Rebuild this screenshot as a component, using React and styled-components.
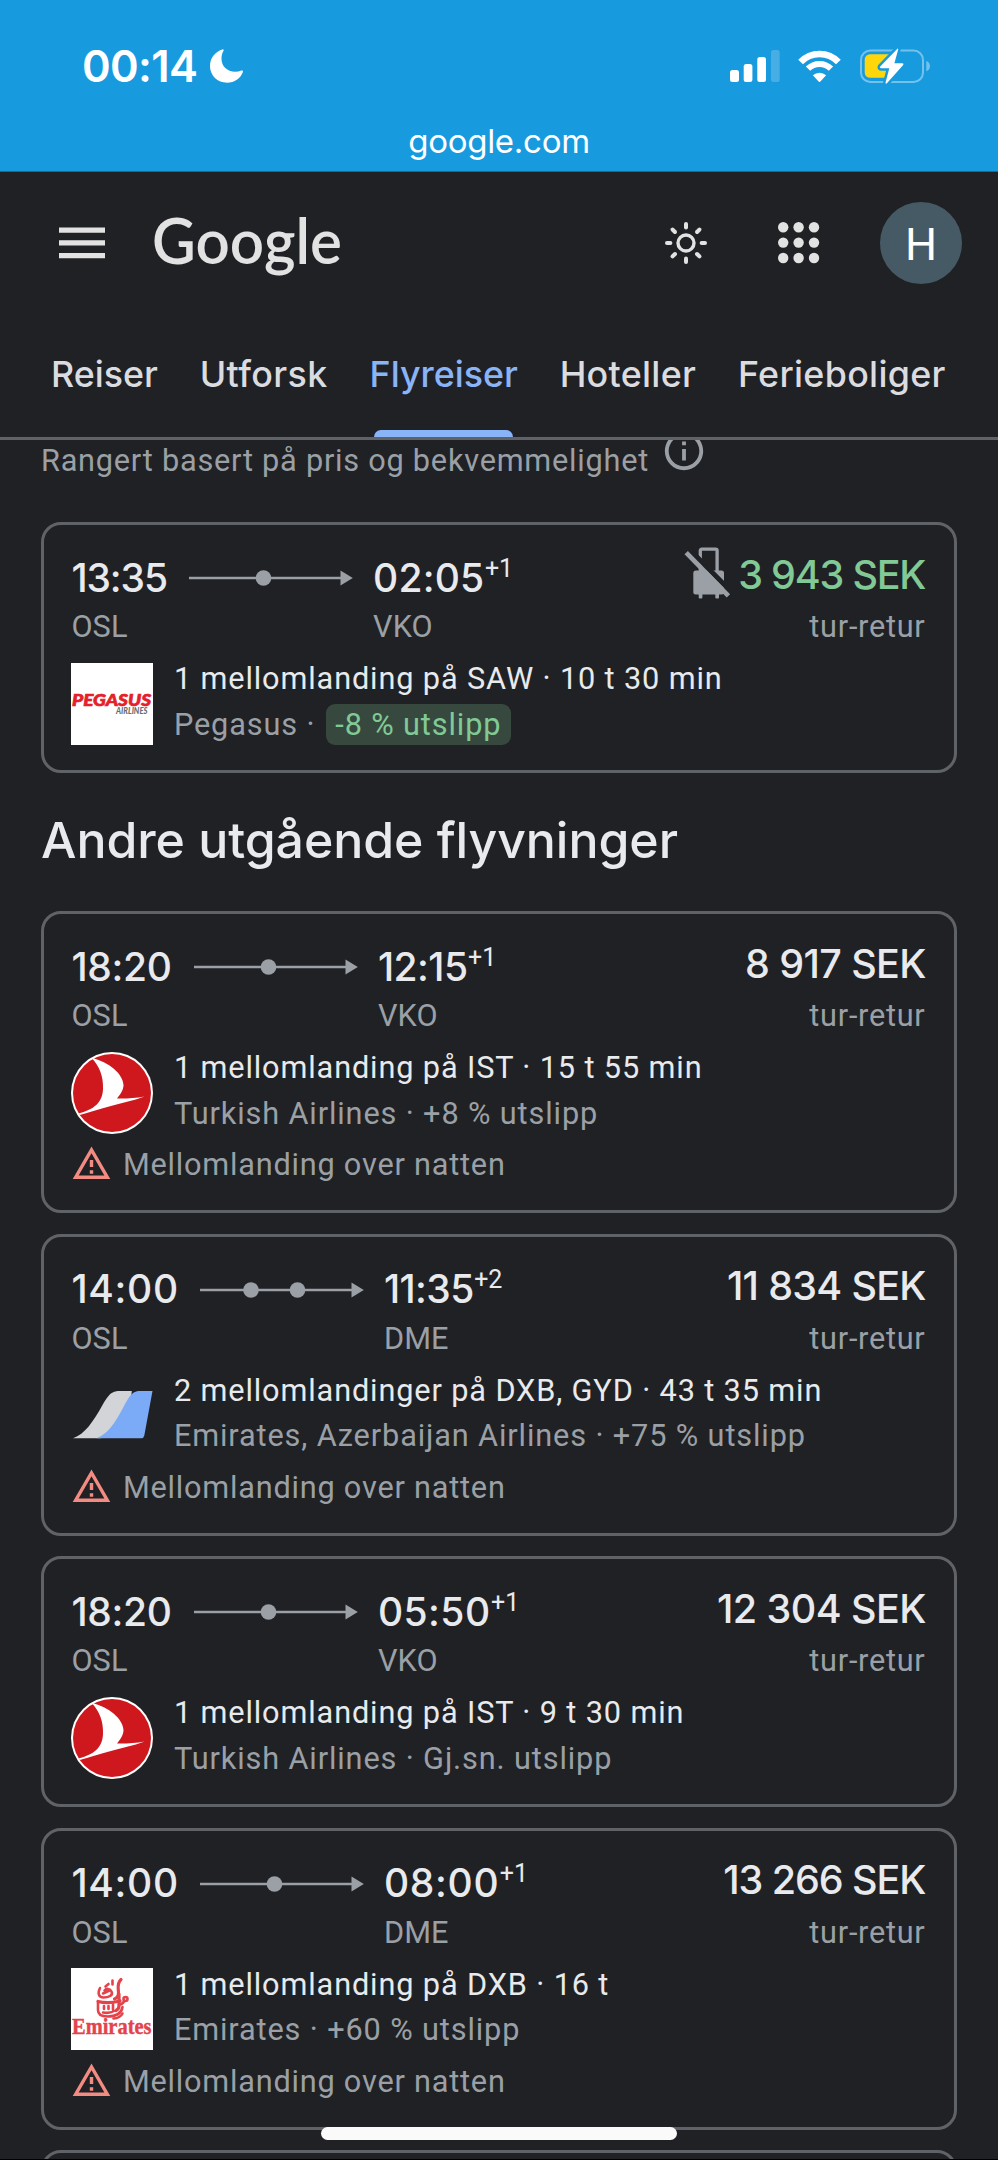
import React from "react";
import styled, { createGlobalStyle } from "styled-components";

const flights = [
  {
    departure: { time: "13:35", code: "OSL", spacing: -1.1, width: 117.7 },
    arrival: { time: "02:05", code: "VKO", spacing: 0.2, days: "+1" },
    stopCount: 1,
    stops: "1 mellomlanding på SAW · 10 t 30 min",
    airline: "Pegasus",
    logo: "pegasus",
    emission: "-8 % utslipp",
    lowEmission: true,
    price: "3 943 SEK",
    priceSpacing: -1.2,
    cheap: true,
    noCarryOn: true
  }
];

const otherFlights = [
  {
    departure: { time: "18:20", code: "OSL", spacing: -0.3, width: 122.5 },
    arrival: { time: "12:15", code: "VKO", spacing: -0.55, days: "+1" },
    stopCount: 1,
    stops: "1 mellomlanding på IST · 15 t 55 min",
    airline: "Turkish Airlines",
    logo: "turkish",
    emission: "+8 % utslipp",
    price: "8 917 SEK",
    priceSpacing: -0.6,
    warning: "Mellomlanding over natten"
  },
  {
    departure: { time: "14:00", code: "OSL", spacing: 0.7, width: 128.5 },
    arrival: { time: "11:35", code: "DME", spacing: -0.6, days: "+2" },
    stopCount: 2,
    stops: "2 mellomlandinger på DXB, GYD · 43 t 35 min",
    airline: "Emirates, Azerbaijan Airlines",
    logo: "multi",
    emission: "+75 % utslipp",
    price: "11 834 SEK",
    priceSpacing: -0.7,
    warning: "Mellomlanding over natten"
  },
  {
    departure: { time: "18:20", code: "OSL", spacing: -0.3, width: 122.5 },
    arrival: { time: "05:50", code: "VKO", spacing: 0.45, days: "+1" },
    stopCount: 1,
    stops: "1 mellomlanding på IST · 9 t 30 min",
    airline: "Turkish Airlines",
    logo: "turkish",
    emission: "Gj.sn. utslipp",
    price: "12 304 SEK",
    priceSpacing: -0.55
  },
  {
    departure: { time: "14:00", code: "OSL", spacing: 0.7, width: 128.5 },
    arrival: { time: "08:00", code: "DME", spacing: 0.7, days: "+1" },
    stopCount: 1,
    stops: "1 mellomlanding på DXB · 16 t",
    airline: "Emirates",
    logo: "emirates",
    emission: "+60 % utslipp",
    price: "13 266 SEK",
    priceSpacing: -1.05,
    warning: "Mellomlanding over natten"
  }
];

const tabs = [
  { label: "Reiser", spacing: 0 },
  { label: "Utforsk", spacing: 0.42 },
  { label: "Flyreiser", spacing: 0 },
  { label: "Hoteller", spacing: 0.31 },
  { label: "Ferieboliger", spacing: 0.31 }
];
const activeTab = "Flyreiser";

const MoonIcon = () => (
  <svg width="34" height="34" viewBox="0 0 34 34" fill="#fff">
    <path d="M13 .2C5.200 2.500 0 9 0 17c0 9.500 7.500 16.700 17 16.700 7.500 0 13.500-4.200 15.900-10.700.4-1.100-.5-1.800-1.500-1.400-2 .8-4 1.200-6.200 1.200-8 0-13.700-5.500-13.700-13 0-3 .7-5.600 2-8 .5-1-.2-1.900-.5-1.600z" />
  </svg>
);

const SignalIcon = () => (
  <svg width="50" height="32" viewBox="0 0 50 32" fill="#fff">
    <rect x="0" y="20" width="9" height="12" rx="2.500" />
    <rect x="13.700" y="14" width="8.700" height="18" rx="2.500" />
    <rect x="27.300" y="7" width="8.700" height="25" rx="2.500" />
    <rect x="41" y="0" width="8.700" height="32" rx="2.500" opacity=".2" />
  </svg>
);

const WifiIcon = () => (
  <svg width="43" height="32" viewBox="0 0 43 32" fill="none" stroke="#fff">
    <path d="M2.600 12A26.200 26.200 0 0 1 40.400 12" strokeWidth="6.600" />
    <path d="M10 18.700A16.200 16.200 0 0 1 33 18.700" strokeWidth="6" />
    <path
      d="M14.900 25.300a9.500 9.500 0 0 1 13.200 0l-5.700 6.200q-.9.800-1.800 0z"
      fill="#fff"
      stroke="none"
    />
  </svg>
);

const BatteryIcon = () => (
  <svg width="71" height="36" viewBox="0 0 71 36">
    <rect
      x="1"
      y="2.500"
      width="62"
      height="31.500"
      rx="9.500"
      fill="none"
      stroke="#fff"
      strokeWidth="2"
      opacity=".4"
    />
    <path d="M66.300 13c4.900 1.500 4.900 8.700 0 10.300z" fill="#fff" opacity=".4" />
    <path d="M10 6.300h22v23.500H10a5.300 5.300 0 0 1-5.300-5.300V11.600A5.300 5.300 0 0 1 10 6.300z" fill="#ffd60a" />
    <path
      d="M37.400.8 20.200 18.500q-.8 1.700.8 1.700h8.300l-3.800 14.600q.2 1.400 1.400.5l16.300-18.200q.9-1.800-.8-1.800h-8l3.800-13.700q0-1.500-.8-.8z"
      fill="#fff"
      stroke="#189adf"
      strokeWidth="5"
      strokeLinejoin="round"
      paintOrder="stroke"
    />
  </svg>
);

const MenuIcon = () => (
  <svg width="46" height="32" viewBox="0 0 46 32" fill="#e2e2e2">
    <path d="M0 0.500h46v5.300H0zM0 13.200h46v5.300H0zM0 26h46v5.300H0z" />
  </svg>
);

const Wordmark = () => (
  <svg width="196" height="86" viewBox="0 0 196 86">
    <text
      x="1"
      y="64"
      fontFamily="Lato, sans-serif"
      fontSize="64"
      fontWeight="600"
      fill="#e2e2e2"
      textLength="190"
      lengthAdjust="spacingAndGlyphs"
    >
      Google
    </text>
  </svg>
);

const SunIcon = () => (
  <svg width="42" height="42" viewBox="-21 -21 42 42" fill="none" stroke="#e2e2e2">
    <circle r="8" strokeWidth="3.400" />
    {[0, 45, 90, 135, 180, 225, 270, 315].map((angle) => (
      <path
        key={angle}
        d="M0-15.600v-3.400"
        strokeWidth="4"
        strokeLinecap="round"
        transform={`rotate(${angle})`}
      />
    ))}
  </svg>
);

const AppsIcon = () => (
  <svg width="42" height="42" viewBox="0 0 42 42" fill="#e2e2e2">
    {[5.2, 20.6, 36].map((y) =>
      [5.2, 20.6, 36].map((x) => <circle key={`${x}-${y}`} cx={x} cy={y} r="5.200" />)
    )}
  </svg>
);

const InfoIcon = () => (
  <svg width="46" height="46" viewBox="0 0 24 24" fill="#9aa0a6">
    <path d="M11 7h2v2h-2zm0 4h2v6h-2zm1-9C6.480 2 2 6.480 2 12s4.480 10 10 10 10-4.480 10-10S17.520 2 12 2zm0 18c-4.410 0-8-3.590-8-8s3.590-8 8-8 8 3.590 8 8-3.590 8-8 8z" />
  </svg>
);

const NoCarryOnIcon = () => (
  <svg width="46" height="52" viewBox="0 0 46 52" fill="#9aa0a6">
    <path
      d="M16.300 24V3.700q0-1.500 1.500-1.500h13.800q1.500 0 1.500 1.500V24"
      fill="none"
      stroke="#9aa0a6"
      strokeWidth="3.300"
    />
    <rect x="9.300" y="23.500" width="30.700" height="24" rx="2.500" />
    <rect x="14.700" y="45" width="3.700" height="6.500" rx="1" />
    <rect x="31.300" y="45" width="3.700" height="6.500" rx="1" />
    <path d="M5.500 2.500 47.500 45" stroke="#202124" strokeWidth="5" />
    <path d="M2.200 5.700 44.400 48.800" stroke="#9aa0a6" strokeWidth="4.700" />
  </svg>
);

const WarningIcon = () => (
  <svg width="41" height="41" viewBox="0 0 24 24" fill="#f28b82">
    <path d="M12 5.990L19.530 19H4.470L12 5.990M12 2L1 21h22L12 2zm1 14h-2v2h2v-2zm0-6h-2v4h2v-4z" />
  </svg>
);

const RouteArrow = ({ stops }) => (
  <svg width="164" height="16" viewBox="0 0 164 16" fill="#9aa0a6">
    <path d="M0 6.700h152v2.600H0z" />
    {(stops === 2 ? [51, 97.5] : [74.5]).map((x) => (
      <circle key={x} cx={x} cy="8" r="7.800" />
    ))}
    <path d="M151.500.5v15l12.300-7.500z" />
  </svg>
);

const PegasusLogo = () => (
  <svg width="82" height="82" viewBox="0 0 82 82">
    <path d="M0 0h82v82H0z" fill="#fff" />
    <g fontFamily="Lato, sans-serif" fontStyle="italic">
      <text
        x="1"
        y="43"
        fontSize="17.500"
        fontWeight="900"
        fill="#e5202b"
        stroke="#e5202b"
        strokeWidth=".7"
        textLength="79"
        lengthAdjust="spacingAndGlyphs"
      >
        PEGASUS
      </text>
      <text
        x="45"
        y="51.300"
        fontSize="8.500"
        fontWeight="900"
        fill="#6b6c70"
        textLength="31.500"
        lengthAdjust="spacingAndGlyphs"
      >
        AIRLINES
      </text>
    </g>
  </svg>
);

const TurkishLogo = () => (
  <svg width="82" height="82" viewBox="0 0 82 82">
    <circle cx="41" cy="41" r="41" fill="#fff" />
    <circle cx="41" cy="41" r="39" fill="#ce181e" />
    <path
      d="M20.500 5.800C38 10 52 22 52.500 33c.1 5-3.500 9.800-6.500 13.500 9 .2 19-.4 27.500-2C62 49 50 51 39 54.200 28 57.200 18 60.400 8.700 63l-1.200-1.600C22 58 31.500 51 32 37c.5-13-3.500-22.500-11.500-31.200z"
      fill="#fff"
    />
  </svg>
);

const MultiLogo = () => (
  <svg width="82" height="82" viewBox="0 0 82 82">
    <path d="M2 64.300C14 60 22 48 31.500 31 39 18.500 41.500 17 49.500 17h11.300l-2 20L30 64.300z" fill="#d2d4d7" />
    <path d="M25.500 64.300C37 60 44 49 52.500 33 60 19 62.500 17 70 17h11.500l-8.200 44.500q-.6 2.800-3 2.800z" fill="#7baaf7" />
  </svg>
);

const EmiratesLogo = () => (
  <svg width="82" height="82" viewBox="0 0 82 82">
    <path d="M0 0h82v82H0z" fill="#fff" />
    <g fill="none" stroke="#e4434b" strokeWidth="2.600" strokeLinecap="round">
      <path d="M50 11.500c-4.500 4-2.500 9-2.500 13.500 0 3-1.500 5-4 6" strokeWidth="3.200" />
      <path d="M41.500 12.500v4M34.500 18.500l3-2.500" />
      <path d="M29 20c-2.500 5-1.500 9.500 3.500 9.500s10-2 8-6c-1.500-3-5-3.500-7-1M32 25.500l6.500-3" />
      <path d="M27 33.500c6 1.500 14 1.500 22-.5" strokeWidth="3.200" />
      <path d="M48 26v12c0 2-1 3.500-3 4.500" strokeWidth="3.200" />
      <path d="M27 34v8c0 4.500 4 6.500 9.500 6.500 8.500 0 14-3 15-9.500" />
      <path d="M33 38v3M37.500 38v3M42 36.500v5.500M32 44.500c4 .8 8 .3 11-1.500" />
      <circle cx="54.500" cy="31" r="2" />
      <path d="M53 33.500c-1.500 2.500-3 3-5 3M42.500 50.500c4-.2 7.500-2 9-5" />
    </g>
    <text
      x="1"
      y="66.300"
      fontFamily="'Liberation Serif', serif"
      fontSize="23"
      fontWeight="700"
      fill="#e4434b"
      stroke="#e4434b"
      strokeWidth=".4"
      textLength="79.500"
      lengthAdjust="spacingAndGlyphs"
    >
      Emirates
    </text>
  </svg>
);

const logos = {
  pegasus: PegasusLogo,
  turkish: TurkishLogo,
  multi: MultiLogo,
  emirates: EmiratesLogo
};

function FlightCard({ flight }) {
  const { departure, arrival } = flight;
  const Logo = logos[flight.logo];

  return (
    <Card $tall={Boolean(flight.warning)}>
      <Summary>
        <Leg $width={departure.width}>
          <Time $spacing={departure.spacing}>{departure.time}</Time>
          <Muted>{departure.code}</Muted>
        </Leg>
        <Arrow>
          <RouteArrow stops={flight.stopCount} />
        </Arrow>
        <Leg>
          <Time $spacing={arrival.spacing}>
            {arrival.time}
            <Days>{arrival.days}</Days>
          </Time>
          <Muted>{arrival.code}</Muted>
        </Leg>
        <Fare>
          <PriceRow>
            {flight.noCarryOn && <NoCarryOnIcon />}
            <Price $cheap={flight.cheap} $spacing={flight.priceSpacing}>
              {flight.price}
            </Price>
          </PriceRow>
          <Muted $spacing={0.73}>tur-retur</Muted>
        </Fare>
      </Summary>
      <Details>
        <LogoBox>
          <Logo />
        </LogoBox>
        <div>
          <DetailLine $bright>{flight.stops}</DetailLine>
          <DetailLine>
            {flight.airline} ·{" "}
            {flight.lowEmission ? <Badge>{flight.emission}</Badge> : flight.emission}
          </DetailLine>
        </div>
      </Details>
      {flight.warning && (
        <Warning>
          <WarningIcon />
          {flight.warning}
        </Warning>
      )}
    </Card>
  );
}

function App() {
  return (
    <Screen>
      <GlobalStyle />
      <StatusBar>
        <StatusRow>
          <Clock>00:14</Clock>
          <MoonIcon />
          <Indicators>
            <SignalIcon />
            <WifiIcon />
            <BatteryIcon />
          </Indicators>
        </StatusRow>
        <Address>google.com</Address>
      </StatusBar>
      <Header>
        <TopRow>
          <MenuIcon />
          <Brand>
            <Wordmark />
          </Brand>
          <Actions>
            <SunIcon />
            <AppsIcon />
          </Actions>
          <Avatar>H</Avatar>
        </TopRow>
        <Tabs>
          {tabs.map((tab) => (
            <Tab key={tab.label} $active={tab.label === activeTab} $spacing={tab.spacing}>
              {tab.label}
            </Tab>
          ))}
        </Tabs>
      </Header>
      <Results>
        <Ranking>
          Rangert basert på pris og bekvemmelighet
          <InfoIcon />
        </Ranking>
        <CardList>
          {flights.map((flight) => (
            <FlightCard key={flight.price} flight={flight} />
          ))}
        </CardList>
        <Heading>Andre utgående flyvninger</Heading>
        <CardList>
          {otherFlights.map((flight) => (
            <FlightCard key={flight.price} flight={flight} />
          ))}
          <Card />
        </CardList>
      </Results>
      <HomeIndicator />
    </Screen>
  );
}

export default App;

const GlobalStyle = createGlobalStyle`
  body {
    margin: 0;
    background: #202124;
  }
  * {
    box-sizing: border-box;
  }
  svg {
    display: block;
    flex-shrink: 0;
    overflow: visible;
  }
`;

const Screen = styled.div`
  position: relative;
  display: flex;
  flex-direction: column;
  width: 998px;
  height: 2160px;
  overflow: hidden;
  border-bottom: 1px solid #000;
  background: #202124;
  color: #e8eaed;
  font-family: Roboto, sans-serif;
  font-size: 30.7px;
`;

const StatusBar = styled.div`
  height: 172px;
  flex-shrink: 0;
  padding-top: 35.5px;
  border-bottom: 1px solid #1a6a97;
  background: #189adf;
  color: #fff;
  font-family: Inter, sans-serif;
`;

const StatusRow = styled.div`
  display: flex;
  align-items: center;
  height: 61px;
  padding: 0 67px 0 82px;
`;

const Clock = styled.span`
  margin-right: 13px;
  font-size: 43.5px;
  font-weight: 600;
  line-height: 60px;
  letter-spacing: -0.66px;
`;

const Indicators = styled.div`
  display: flex;
  align-items: center;
  gap: 18.7px;
  margin-left: auto;
`;

const Address = styled.div`
  margin-top: 24px;
  font-size: 33px;
  line-height: 40px;
  letter-spacing: -0.27px;
  text-align: center;
`;

const Header = styled.header`
  flex-shrink: 0;
  border-bottom: 3px solid #5f6368;
`;

const TopRow = styled.div`
  display: flex;
  align-items: center;
  height: 142px;
  padding: 0 36px 0 59px;
`;

const Brand = styled.div`
  margin-left: 46px;
`;

const Actions = styled.div`
  display: flex;
  gap: 71px;
  margin: 0 60px 0 auto;
`;

const Avatar = styled.div`
  display: flex;
  align-items: center;
  justify-content: center;
  width: 82px;
  height: 82px;
  padding-top: 2px;
  border-radius: 50%;
  background: #455a64;
  color: #fff;
  font-size: 45px;
`;

const Tabs = styled.nav`
  display: flex;
  gap: 41.8px;
  height: 123px;
  padding-left: 51px;
`;

const Tab = styled.div`
  position: relative;
  color: ${(p) => (p.$active ? "#8ab4f8" : "#dadce0")};
  font-family: Inter, sans-serif;
  font-size: 35.8px;
  font-weight: 500;
  line-height: 121px;
  letter-spacing: ${(p) => p.$spacing}px;

  &::after {
    content: "";
    display: ${(p) => (p.$active ? "block" : "none")};
    position: absolute;
    right: 5px;
    bottom: 0;
    left: 4px;
    height: 7px;
    border-radius: 8px 8px 0 0;
    background: #8ab4f8;
  }
`;

const Results = styled.main`
  flex: 1;
  min-height: 0;
  padding: 2.5px 41px 0;
  overflow: hidden;
`;

const Ranking = styled.div`
  display: flex;
  gap: 12px;
  height: 36px;
  margin-bottom: 43.5px;
  color: #9aa0a6;
  line-height: 36px;
  letter-spacing: 0.76px;

  svg {
    margin-top: -15px;
  }
`;

const CardList = styled.div`
  display: flex;
  flex-direction: column;
  gap: 20.5px;
`;

const Heading = styled.h2`
  margin: 37px 0 41px;
  font-family: Inter, sans-serif;
  font-size: 50px;
  font-weight: 500;
  line-height: 60px;
  letter-spacing: -0.06px;
`;

const Card = styled.article`
  flex-shrink: 0;
  height: ${(p) => (p.$tall ? 302 : 251)}px;
  padding: 27.5px 28.5px 0 27.4px;
  border: 3px solid #5f6368;
  border-radius: 20px;
`;

const Summary = styled.div`
  display: flex;
`;

const Leg = styled.div`
  width: ${(p) => (p.$width ? `${p.$width}px` : "auto")};
`;

const Time = styled.div`
  height: 50px;
  font-family: Inter, sans-serif;
  font-size: 39px;
  font-weight: 500;
  line-height: 50px;
  letter-spacing: ${(p) => p.$spacing}px;
`;

const Days = styled.span`
  margin-left: 0.5px;
  font-family: Roboto, sans-serif;
  font-size: 25px;
  font-weight: 400;
  line-height: 0;
  letter-spacing: 0;
  vertical-align: 15px;
`;

const Muted = styled.div`
  margin-top: 6.5px;
  color: #9aa0a6;
  line-height: 36px;
  letter-spacing: ${(p) => p.$spacing || 0.1}px;
`;

const Arrow = styled.div`
  margin: 17.5px 20px 0 0;
`;

const Fare = styled.div`
  margin: -3px 0 0 auto;
  text-align: right;

  ${Muted} {
    margin-top: 9.5px;
  }
`;

const PriceRow = styled.div`
  display: flex;
  align-items: center;
  justify-content: flex-end;
  gap: 8px;
  height: 50px;

  svg {
    margin-top: -4px;
  }
`;

const Price = styled.span`
  margin-right: ${(p) => -p.$spacing - 1}px;
  color: ${(p) => (p.$cheap ? "#81c995" : "#e8eaed")};
  font-family: Inter, sans-serif;
  font-size: 39.5px;
  font-weight: 500;
  line-height: 50px;
  letter-spacing: ${(p) => p.$spacing}px;
  white-space: nowrap;
`;

const Details = styled.div`
  display: flex;
  gap: 20.5px;
  margin-top: 11px;
`;

const LogoBox = styled.div`
  width: 82px;
  height: 82px;
  margin-top: 6.5px;
`;

const DetailLine = styled.div`
  height: 45.6px;
  color: ${(p) => (p.$bright ? "#e8eaed" : "#9aa0a6")};
  line-height: 45.6px;
  letter-spacing: 0.87px;
  white-space: nowrap;
`;

const Badge = styled.span`
  display: inline-block;
  height: 41px;
  margin-left: 2.5px;
  padding: 0 10px 0 9px;
  border-radius: 9px;
  background: #37493f;
  color: #81c995;
  line-height: 41px;
`;

const Warning = styled.div`
  display: flex;
  align-items: center;
  gap: 10.5px;
  height: 36px;
  margin-top: 10.5px;
  color: #9aa0a6;
  letter-spacing: 0.78px;

  svg {
    margin-top: -2px;
  }
`;

const HomeIndicator = styled.div`
  position: absolute;
  bottom: 19px;
  left: 321px;
  width: 356px;
  height: 13px;
  border-radius: 7px;
  background: #fafafa;
`;
